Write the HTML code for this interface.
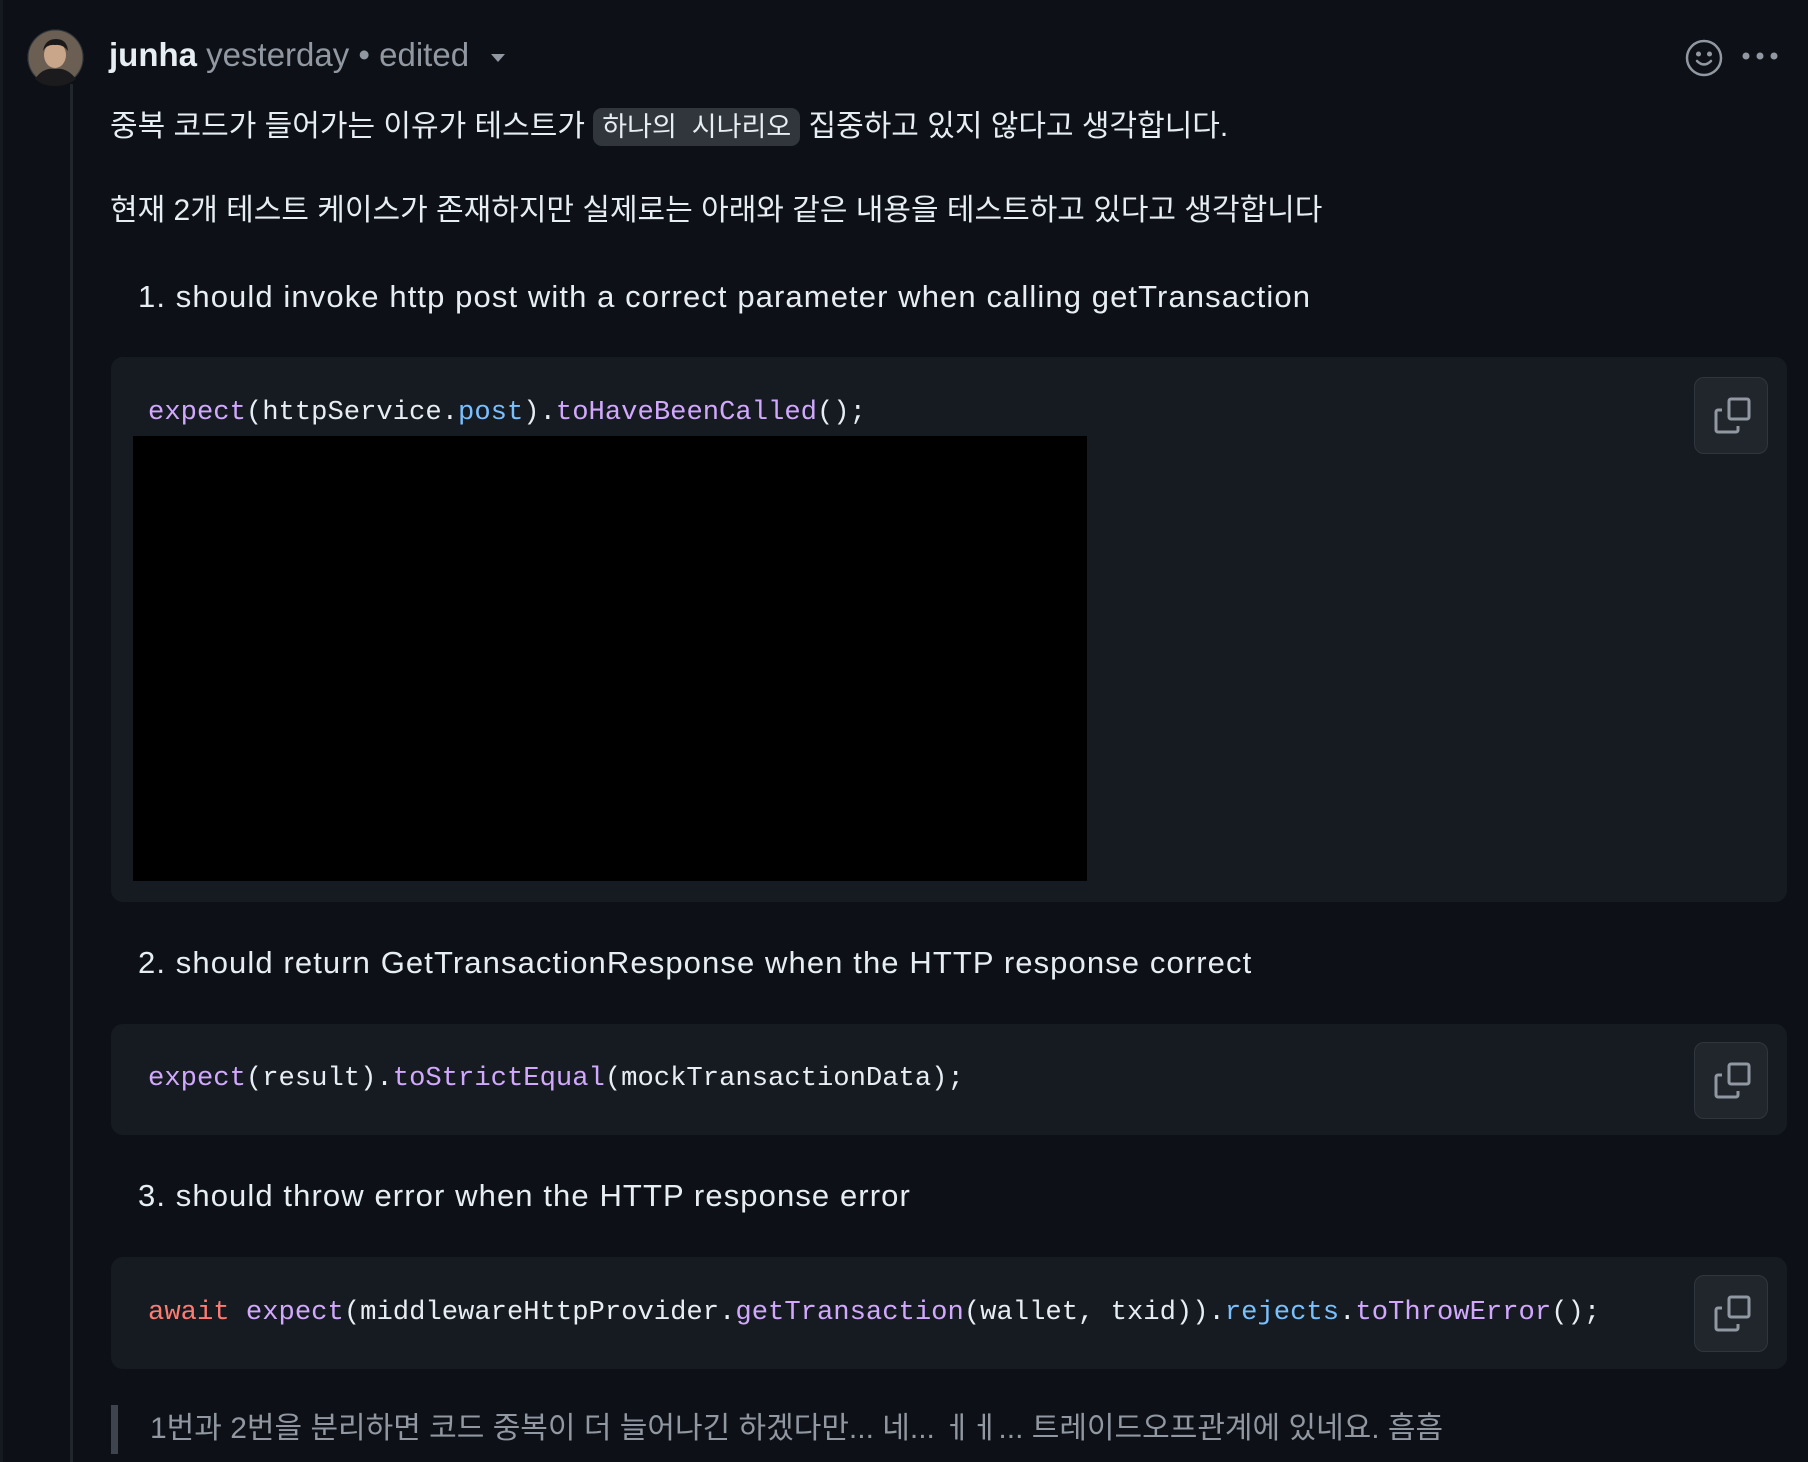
<!DOCTYPE html>
<html><head><meta charset="utf-8"><style>
*{margin:0;padding:0;box-sizing:border-box}
body{width:1808px;height:1462px;background:#0d1117;position:relative;overflow:hidden;font-family:"Liberation Sans","Noto Sans CJK KR",sans-serif;color:#e6edf3}
.a{position:absolute;white-space:nowrap}
.t{font-size:30px;line-height:40px}
.en{font-size:31px;letter-spacing:1.1px}
.cb{position:absolute;left:111px;width:1676px;background:#161b22;border-radius:12px}
.code{position:absolute;left:148px;font-family:"Liberation Mono",monospace;font-size:27.2px;line-height:36px;white-space:pre;color:#e6edf3}
.p{color:#d2a8ff}.b{color:#79c0ff}.r{color:#ff7b72}
.copy{position:absolute;left:1694px;width:74px;height:77px;border:1px solid #30363d;border-radius:10px;background:#21262d}
.copy svg{position:absolute;left:18px;top:19px}
</style></head><body>
<div class="a" style="left:0;top:0;width:3px;height:1462px;background:#151a21"></div>
<div class="a" style="left:70px;top:84px;width:3px;height:1378px;background:#21262d"></div>
<svg class="a" style="left:27px;top:29px" width="57" height="57" viewBox="0 0 57 57">
<circle cx="28.5" cy="28.5" r="28" fill="#6b5e52"/>
<circle cx="28.5" cy="28.5" r="27.5" fill="none" stroke="#30363d"/>
<ellipse cx="28" cy="26" rx="11" ry="13" fill="#c9a58a"/>
<path d="M16 22 Q18 10 29 10 Q40 10 41 22 Q36 15 28 16 Q20 15 16 22Z" fill="#1a1a1a"/>
<path d="M8 50 Q16 38 28 40 Q40 38 49 50 Q40 57 28 57 Q16 57 8 50Z" fill="#1b1b1d"/>
</svg>
<div class="a" style="left:109px;top:33px;font-size:33px;line-height:44px"><b style="color:#e6edf3">junha</b> <span style="color:#9198a1">yesterday • edited</span></div>
<svg class="a" style="left:490px;top:53px" width="16" height="10"><path d="M1 1h14L8 9z" fill="#9198a1"/></svg>
<svg class="a" style="left:1685px;top:39px" width="38" height="38" viewBox="0 0 38 38" fill="none" stroke="#9198a1" stroke-width="2.5"><circle cx="19" cy="19" r="17"/><path d="M12 22q7 7 14 0" stroke-linecap="round"/><circle cx="13.5" cy="15" r="1.3" fill="#9198a1"/><circle cx="24.5" cy="15" r="1.3" fill="#9198a1"/></svg>
<svg class="a" style="left:1741px;top:51px" width="38" height="10"><circle cx="5" cy="5" r="3.5" fill="#9198a1"/><circle cx="19" cy="5" r="3.5" fill="#9198a1"/><circle cx="33" cy="5" r="3.5" fill="#9198a1"/></svg>

<div class="a t" style="left:110px;top:107px">중복 코드가 들어가는 이유가 테스트가 <span style="background:#31363d;border-radius:9px;padding:4px 9px;font-size:27px">하나의 &nbsp;시나리오</span> 집중하고 있지 않다고 생각합니다.</div>
<div class="a t" style="left:110px;top:191px">현재 2개 테스트 케이스가 존재하지만 실제로는 아래와 같은 내용을 테스트하고 있다고 생각합니다</div>
<div class="a t en" style="left:138px;top:277px">1. should invoke http post with a correct parameter when calling getTransaction</div>

<div class="cb" style="top:357px;height:545px"></div>
<div class="code" style="top:395px"><span class="p">expect</span>(httpService.<span class="b">post</span>).<span class="p">toHaveBeenCalled</span>();</div>
<div class="a" style="left:133px;top:436px;width:954px;height:445px;background:#000"></div>
<div class="copy" style="top:377px"><svg width="38" height="38" viewBox="0 0 38 38" fill="none" stroke="#9198a1" stroke-width="3" stroke-linejoin="round"><rect x="16" y="2" width="20" height="20" rx="2"/><path d="M9 13H5a2 2 0 0 0-2 2v18a2 2 0 0 0 2 2h18a2 2 0 0 0 2-2v-4"/></svg></div>

<div class="a t en" style="left:138px;top:943px">2. should return GetTransactionResponse when the HTTP response correct</div>
<div class="cb" style="top:1024px;height:111px"></div>
<div class="code" style="top:1061px"><span class="p">expect</span>(result).<span class="p">toStrictEqual</span>(mockTransactionData);</div>
<div class="copy" style="top:1042px"><svg width="38" height="38" viewBox="0 0 38 38" fill="none" stroke="#9198a1" stroke-width="3" stroke-linejoin="round"><rect x="16" y="2" width="20" height="20" rx="2"/><path d="M9 13H5a2 2 0 0 0-2 2v18a2 2 0 0 0 2 2h18a2 2 0 0 0 2-2v-4"/></svg></div>

<div class="a t en" style="left:138px;top:1176px">3. should throw error when the HTTP response error</div>
<div class="cb" style="top:1257px;height:112px"></div>
<div class="code" style="top:1295px"><span class="r">await</span> <span class="p">expect</span>(middlewareHttpProvider.<span class="p">getTransaction</span>(wallet, txid)).<span class="b">rejects</span>.<span class="p">toThrowError</span>();</div>
<div class="copy" style="top:1275px"><svg width="38" height="38" viewBox="0 0 38 38" fill="none" stroke="#9198a1" stroke-width="3" stroke-linejoin="round"><rect x="16" y="2" width="20" height="20" rx="2"/><path d="M9 13H5a2 2 0 0 0-2 2v18a2 2 0 0 0 2 2h18a2 2 0 0 0 2-2v-4"/></svg></div>

<div class="a" style="left:111px;top:1405px;width:7px;height:49px;background:#3d444d"></div>
<div class="a t" style="left:150px;top:1409px;color:#9198a1">1번과 2번을 분리하면 코드 중복이 더 늘어나긴 하겠다만... 네... ㅔㅔ... 트레이드오프관계에 있네요. 흠흠</div>
</body></html>
